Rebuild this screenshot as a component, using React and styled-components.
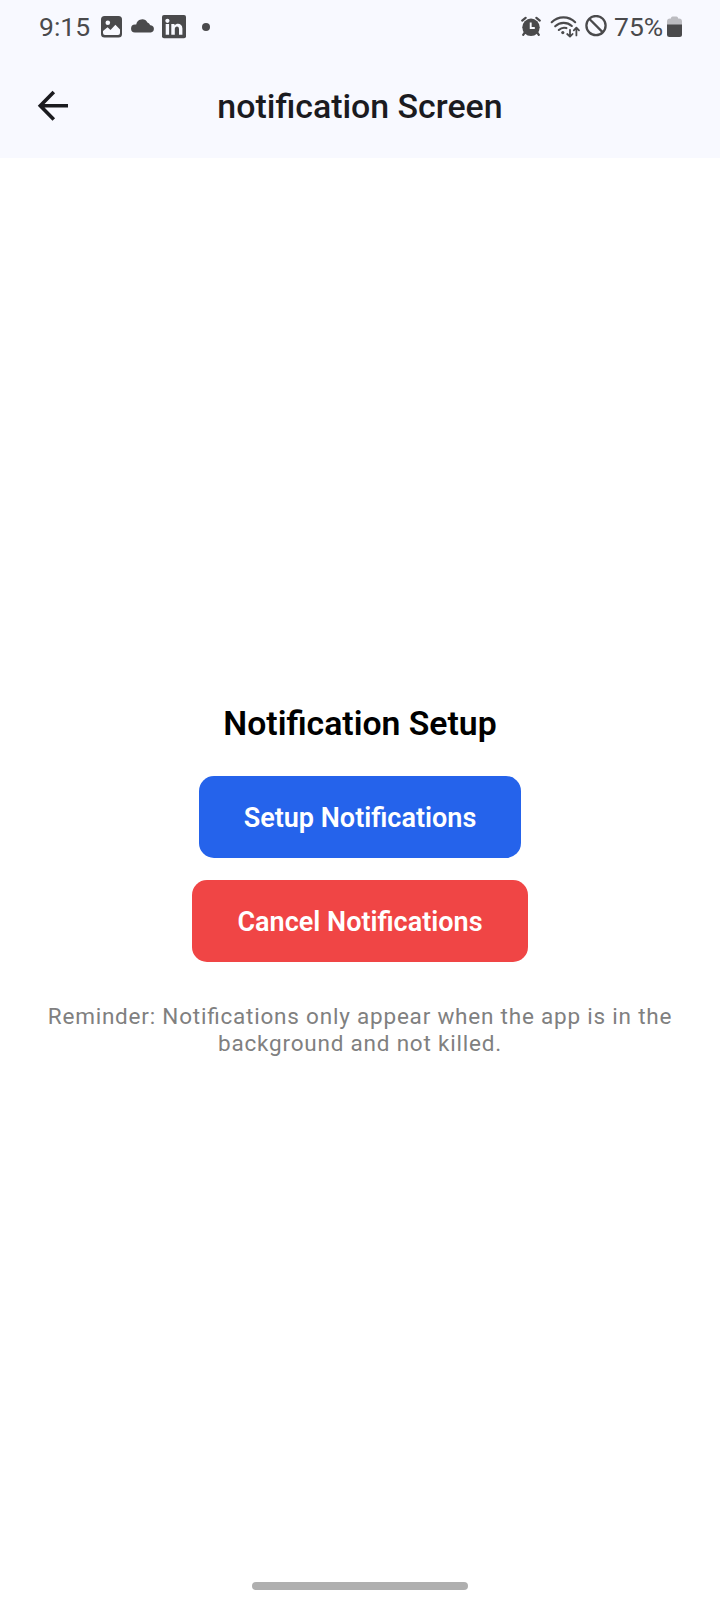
import React from "react";
import styled, { createGlobalStyle } from "styled-components";

const GlobalStyle = createGlobalStyle`
  *, *::before, *::after { box-sizing: border-box; }
  body { margin: 0; background: #fff; font-family: Roboto, "Liberation Sans", sans-serif; }
`;

const Screen = styled.div`
  display: flex;
  flex-direction: column;
  width: 720px;
  height: 1600px;
  background: #fff;
  overflow: hidden;
`;

const Header = styled.header`
  height: 158px;
  flex: none;
  background: #f8f9ff;
`;

const StatusBar = styled.div`
  display: flex;
  justify-content: space-between;
  height: 53px;
  padding: 0 38px 0 39px;
`;

const StatusGroup = styled.div`
  display: flex;
  align-items: center;
`;

const StatusText = styled.span`
  width: ${(p) => p.$width}px;
  margin-left: ${(p) => p.$gap || 0}px;
  font-size: 26.5px;
  line-height: 54px;
  color: #4a4a4c;
  white-space: nowrap;
`;

const StatusIcon = styled.svg`
  display: block;
  flex: none;
  margin-left: ${(p) => p.$gap || 0}px;
  color: #4a4a4c;
`;

const AppBar = styled.div`
  display: grid;
  grid-template-columns: 66px 1fr 66px;
  align-items: center;
  height: 105px;
  padding: 0 20px;
`;

const BackButton = styled.button`
  display: flex;
  justify-content: center;
  padding: 0;
  border: 0;
  background: none;
  color: #1b1b1f;
`;

const Title = styled.h1`
  margin: 0;
  padding-top: 1px;
  text-align: center;
  font-size: 33.9px;
  font-weight: 500;
  line-height: 39px;
  color: #1b1b1f;
`;

const Content = styled.main`
  display: flex;
  flex-direction: column;
  align-items: center;
  flex: 1;
  padding: 546px 37px 0;
`;

const Heading = styled.h2`
  margin: 0 0 32px;
  font-size: 33.75px;
  font-weight: 600;
  line-height: 40px;
  color: #000;
`;

const ActionButton = styled.button`
  width: ${(p) => p.$width}px;
  height: 82px;
  margin: 0 0 22px;
  padding: 1px 0 0;
  border: 0;
  border-radius: 15px;
  background: ${(p) => p.$color};
  color: #fff;
  font: 600 27px/32px Roboto, "Liberation Sans", sans-serif;
`;

const Reminder = styled.p`
  margin: 19px 0 0;
  text-align: center;
  font-size: 22.5px;
  line-height: 27px;
  letter-spacing: 0.79px;
  font-feature-settings: "liga" 1;
  color: #808080;
`;

const NavBar = styled.footer`
  display: flex;
  justify-content: center;
  height: 18px;
`;

const HomeHandle = styled.div`
  width: 216px;
  height: 8px;
  border-radius: 4px;
  background: #afafaf;
`;

const PictureIcon = () => (
  <StatusIcon width="21" height="22" viewBox="0 0 21 22" $gap={11}>
    <rect width="21" height="21.5" rx="3.5" fill="currentColor" />
    <circle cx="6.8" cy="6.8" r="2.3" fill="#f8f9ff" />
    <path d="M2 17V15L6.5 11.2L9.5 14L14.4 8.8L19 13.4V17Q19 19 17 19H4Q2 19 2 17Z" fill="#f8f9ff" />
  </StatusIcon>
);

const CloudIcon = () => (
  <StatusIcon width="24" height="22" viewBox="0 0 24 22" $gap={9}>
    <path d="M4 16.5a4 4 0 0 1 .1-8h1.1a6 6 0 0 1 11.2-2.1 5 5 0 0 1 2.8 2.8h.6a3.7 3.7 0 0 1 0 7.3z" fill="currentColor" />
  </StatusIcon>
);

const LinkedInIcon = () => (
  <StatusIcon width="24" height="24" viewBox="0 0 24 24" $gap={7}>
    <rect width="24" height="23.2" rx="2" fill="currentColor" />
    <circle cx="5.4" cy="5.8" r="2.1" fill="#f8f9ff" />
    <path d="M3.7 9H7.1V19.7H3.7ZM9.3 9H12.5V10.5C14.5 7.5 20.4 8.1 20.4 13.4V19.7H17V14.1C17 10.7 12.8 10.9 12.8 14.1V19.7H9.3Z" fill="#f8f9ff" />
  </StatusIcon>
);

const DotIcon = () => (
  <StatusIcon width="8" height="8" viewBox="0 0 8 8" $gap={16}>
    <circle cx="4" cy="4" r="4" fill="currentColor" />
  </StatusIcon>
);

const AlarmIcon = () => (
  <StatusIcon width="20" height="22" viewBox="0 0 20 22">
    <circle cx="10" cy="11.3" r="8.7" fill="currentColor" />
    <path d="M1.2 4.6L4.6 1.8M18.8 4.6L15.4 1.8M3.8 16.5L2.2 18.8M16.2 16.5L17.8 18.8" fill="none" stroke="currentColor" strokeWidth="2.2" strokeLinecap="round" />
    <path d="M9.7 6.6V12H13.8" fill="none" stroke="#f8f9ff" strokeWidth="1.9" />
  </StatusIcon>
);

const WifiIcon = () => (
  <StatusIcon width="31" height="24" viewBox="0 0 31 24" $gap={9}>
    <g fill="none" stroke="currentColor" strokeWidth="2.1" strokeLinecap="round" strokeLinejoin="round">
      <path d="M1.7 7.2C8.3 .7 18.7 .7 25.2 7.2" />
      <path d="M5.2 11.3C9.8 6.8 17.2 6.7 21.8 11" />
      <path d="M8.8 15C11.2 12.7 13.9 12.3 16.4 13.1" />
      <path d="M20 14.8V21.5M17.2 19L20 21.7L22.6 19M26.4 20.4V13M23.8 15.4L26.4 12.7L29 15.4" strokeWidth="1.8" />
    </g>
    <circle cx="12.8" cy="17.6" r="1.6" fill="currentColor" />
  </StatusIcon>
);

const BlockedIcon = () => (
  <StatusIcon width="22" height="24" viewBox="0 0 22 24" $gap={4}>
    <circle cx="11" cy="10.6" r="9.6" fill="none" stroke="currentColor" strokeWidth="2.3" />
    <path d="M4.2 3.8L17.8 17.4" stroke="currentColor" strokeWidth="2.3" />
  </StatusIcon>
);

const BatteryIcon = () => (
  <StatusIcon width="15" height="22" viewBox="0 0 15 22" $gap={4}>
    <path d="M4 2Q4 .5 5.5 .5H9.5Q11 .5 11 2V2.5H12Q15 2.5 15 5.5V9H0V5.5Q0 2.5 3 2.5H4Z" fill="#bcbcc1" />
    <path d="M0 8.5H15V18.5Q15 21 12.5 21H2.5Q0 21 0 18.5Z" fill="currentColor" />
  </StatusIcon>
);

const BackArrow = () => (
  <svg width="32" height="32" viewBox="0 0 32 32" fill="none" stroke="currentColor" strokeWidth="3.6">
    <path d="M31 15.7H4M16.8 2L3.3 15.7L16.8 29.4" />
  </svg>
);

export default function App() {
  return (
    <>
      <GlobalStyle />
      <Screen>
        <Header>
          <StatusBar>
            <StatusGroup>
              <StatusText $width={51}>9:15</StatusText>
              <PictureIcon />
              <CloudIcon />
              <LinkedInIcon />
              <DotIcon />
            </StatusGroup>
            <StatusGroup>
              <AlarmIcon />
              <WifiIcon />
              <BlockedIcon />
              <StatusText $width={49} $gap={7}>75%</StatusText>
              <BatteryIcon />
            </StatusGroup>
          </StatusBar>
          <AppBar>
            <BackButton aria-label="Back">
              <BackArrow />
            </BackButton>
            <Title>notification Screen</Title>
          </AppBar>
        </Header>
        <Content>
          <Heading>Notification Setup</Heading>
          <ActionButton $color="#2563eb" $width={322}>Setup Notifications</ActionButton>
          <ActionButton $color="#f04545" $width={336}>Cancel Notifications</ActionButton>
          <Reminder>
            Reminder: Notifications only appear when the app is in the background and not killed.
          </Reminder>
        </Content>
        <NavBar>
          <HomeHandle />
        </NavBar>
      </Screen>
    </>
  );
}
